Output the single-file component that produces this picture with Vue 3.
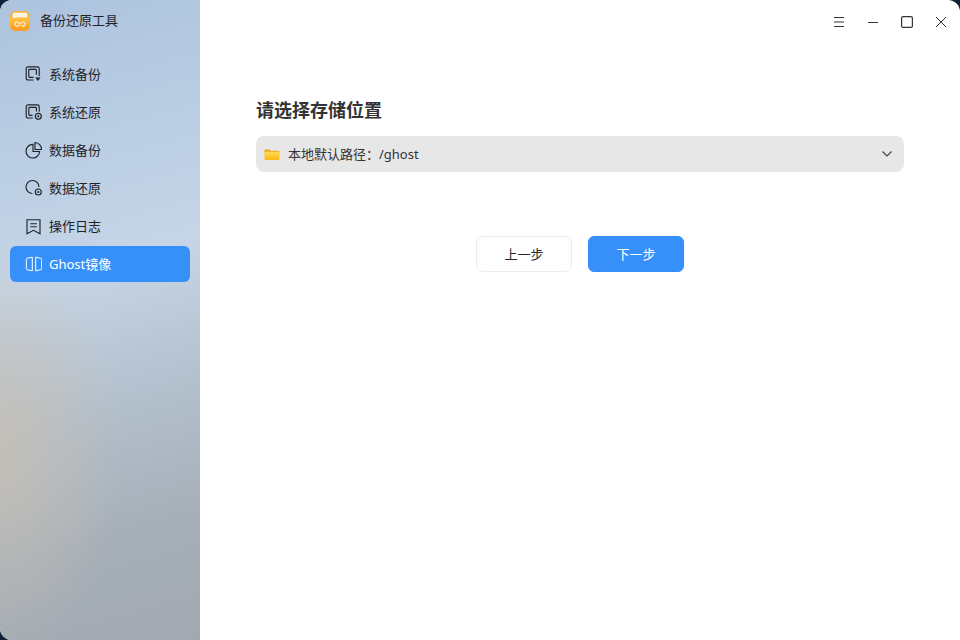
<template>
<div class="window">
  <aside class="sidebar">
    <div class="brand">
      <svg class="logo" width="20" height="20" viewBox="0 0 20 20">
        <defs>
          <linearGradient id="logoBody" x1="0" y1="0" x2="0" y2="1">
            <stop offset="0" stop-color="#ffc445" />
            <stop offset="1" stop-color="#f99a24" />
          </linearGradient>
        </defs>
        <rect x="0" y="0" width="20" height="20" rx="5.5" fill="#f9b23a" />
        <rect x="2.5" y="1.8" width="15" height="7" rx="1.5" fill="#fbf1e6" />
        <path d="M0 7.2c5 0 6.5-.4 8-.9h12V14.5a5.5 5.5 0 0 1-5.5 5.5h-9A5.5 5.5 0 0 1 0 14.5z" fill="url(#logoBody)" />
        <path d="M9.8 12.8c-.9-1.2-1.7-1.8-2.7-1.8a2.1 2.1 0 0 0 0 4.2c1.1 0 2-.9 2.9-2.1s1.8-2.1 2.9-2.1a2.1 2.1 0 0 1 0 4.2c-.7 0-1.3-.3-1.9-.8" fill="none" stroke="#fff1d2" stroke-width="1.1" />
      </svg>
      <span class="brand-name">备份还原工具</span>
    </div>
    <nav class="nav">
      <div v-for="item in navItems" :key="item.label" class="nav-item" :class="{ active: item.active }">
        <svg class="nav-icon" width="18" height="18" viewBox="0 0 18 18" fill="none" stroke="currentColor" stroke-width="1.15">
          <template v-if="item.icon === 'sysBackup'">
            <path d="M9.5 15H4a1.8 1.8 0 0 1-1.8-1.8V3.6A1.8 1.8 0 0 1 4 1.8h9.4a1.8 1.8 0 0 1 1.8 1.8v7.6" />
            <path d="M9.5 12.4H5.6a.8.8 0 0 1-.8-.8V5.2a.8.8 0 0 1 .8-.8h6a.8.8 0 0 1 .8.8v4.5" />
            <path d="M11.2 12.6h5.4l-2.7 3.3z" fill="currentColor" stroke="none" />
          </template>
          <template v-else-if="item.icon === 'sysRestore'">
            <path d="M8.8 15H4a1.8 1.8 0 0 1-1.8-1.8V3.6A1.8 1.8 0 0 1 4 1.8h9.4a1.8 1.8 0 0 1 1.8 1.8v5.2" />
            <path d="M8.6 12.4h-3a.8.8 0 0 1-.8-.8V5.2a.8.8 0 0 1 .8-.8h6a.8.8 0 0 1 .8.8v3.2" />
            <circle cx="14.3" cy="13.3" r="3" />
            <circle cx="14.3" cy="13.3" r="1.1" fill="currentColor" stroke="none" />
          </template>
          <template v-else-if="item.icon === 'dataBackup'">
            <path d="M9 3.4A6.8 6.8 0 1 0 15.6 10.5H9z" />
            <path d="M11 1.5v7h6.6A7 7 0 0 0 11 1.5z" />
          </template>
          <template v-else-if="item.icon === 'dataRestore'">
            <path d="M15 8A6.5 6.5 0 1 0 8.5 14.5" />
            <circle cx="14.3" cy="13" r="3" />
            <circle cx="14.3" cy="13" r="1.1" fill="currentColor" stroke="none" />
          </template>
          <template v-else-if="item.icon === 'log'">
            <path d="M3 2.7h13v14l-6.5-3.4L3 16.7z" />
            <path d="M6.2 6.7h6.6M6.2 9.7h6.6" />
          </template>
          <template v-else>
            <path d="M3.5 3.2L8.3 2.2v13.6l-4.8-1a1.2 1.2 0 0 1-1.2-1.2V4.4A1.2 1.2 0 0 1 3.5 3.2z" stroke-width="1" />
            <path d="M16.5 3.2l-4.8-1v13.6l4.8-1a1.2 1.2 0 0 0 1.2-1.2V4.4A1.2 1.2 0 0 0 16.5 3.2z" stroke-width="1" />
          </template>
        </svg>
        <span class="nav-label">{{ item.label }}</span>
      </div>
    </nav>
  </aside>

  <main class="main">
    <header class="titlebar">
      <svg width="12" height="12" viewBox="0 0 12 12" stroke="#333" stroke-width="1" fill="none">
        <path d="M1 1.5h10M1 6h10M1 10.5h10" />
      </svg>
      <svg width="12" height="12" viewBox="0 0 12 12" stroke="#333" stroke-width="1.2" fill="none">
        <path d="M1 6.5h10" />
      </svg>
      <svg width="12" height="12" viewBox="0 0 12 12" stroke="#333" stroke-width="1.2" fill="none">
        <rect x="0.6" y="0.6" width="10.8" height="10.8" rx="1.5" />
      </svg>
      <svg width="12" height="12" viewBox="0 0 12 12" stroke="#333" stroke-width="1" fill="none">
        <path d="M1 1l10 10M11 1L1 11" />
      </svg>
    </header>

    <section class="content">
      <h1 class="heading">请选择存储位置</h1>
      <div class="select">
        <svg class="folder" width="16" height="14" viewBox="0 0 16 14">
          <defs>
            <linearGradient id="folderBody" x1="0" y1="0" x2="0" y2="1">
              <stop offset="0" stop-color="#ffdc55" />
              <stop offset="1" stop-color="#fdb813" />
            </linearGradient>
          </defs>
          <path d="M0.5 3.5a1 1 0 0 1 1-1h4L7 3.7h7.5a1 1 0 0 1 1 1V6H.5z" fill="#efa81f" />
          <rect x="0.5" y="4.7" width="15" height="8.3" rx="1" fill="url(#folderBody)" />
        </svg>
        <span class="select-text">本地默认路径：/ghost</span>
        <svg class="chevron" width="12" height="8" viewBox="0 0 12 8" fill="none" stroke="#444" stroke-width="1.2">
          <path d="M1.5 1.5L6 6l4.5-4.5" />
        </svg>
      </div>
      <div class="actions">
        <button type="button" class="btn">上一步</button>
        <button type="button" class="btn primary">下一步</button>
      </div>
    </section>
  </main>
</div>
</template>

<script setup>
const navItems = [
  { label: '系统备份', icon: 'sysBackup' },
  { label: '系统还原', icon: 'sysRestore' },
  { label: '数据备份', icon: 'dataBackup' },
  { label: '数据还原', icon: 'dataRestore' },
  { label: '操作日志', icon: 'log' },
  { label: 'Ghost镜像', icon: 'ghost', active: true },
]
</script>

<style>
html, body {
  margin: 0;
  background: #0f2238;
  overflow: hidden;
}
</style>

<style scoped>
.window {
  width: 960px;
  height: 640px;
  display: flex;
  overflow: hidden;
  border-radius: 12px 12px 0 12px;
  background: #fff;
  font-family: "Noto Sans", "Noto Sans CJK SC", sans-serif;
  color: #262626;
}

.sidebar {
  width: 200px;
  flex-shrink: 0;
  display: flex;
  flex-direction: column;
  padding: 0 10px;
  box-sizing: border-box;
  background:
    radial-gradient(ellipse 120px 210px at 0 450px, rgba(200, 191, 178, 0.8), rgba(200, 191, 178, 0)),
    linear-gradient(165deg, #adc3de 0%, #b9cde3 22%, #c6d5e6 42%, #b3c0cd 62%, #a6afb8 82%, #a2a9b1 100%);
}

.brand {
  height: 40px;
  display: flex;
  align-items: center;
  gap: 10px;
  font-size: 13px;
  color: #1f2329;
}

.logo {
  margin-top: 1px;
}

.brand-name,
.nav-label,
.select-text {
  padding-bottom: 2px;
}

.nav {
  margin-top: 16px;
  display: flex;
  flex-direction: column;
  gap: 2px;
}

.nav-item {
  height: 36px;
  display: flex;
  align-items: center;
  gap: 7px;
  padding-left: 14px;
  border-radius: 6px;
  font-size: 13px;
  color: #1f2329;
}

.nav-item.active {
  background: #3790fa;
  color: #fff;
}

.nav-icon {
  flex-shrink: 0;
}

.main {
  flex: 1;
  display: flex;
  flex-direction: column;
  min-width: 0;
}

.titlebar {
  height: 44px;
  display: flex;
  justify-content: flex-end;
  align-items: center;
  gap: 22px;
  padding: 0 13px 0 0;
}

.content {
  padding: 54px 56px 0;
}

.heading {
  margin: 0;
  font-size: 18px;
  line-height: 24px;
  font-weight: 600;
  color: #333;
}

.select {
  margin-top: 14px;
  height: 36px;
  display: flex;
  align-items: center;
  padding: 0 11px 0 8px;
  border-radius: 8px;
  background: #e7e7e7;
  font-size: 13px;
  color: #333;
}

.select-text {
  margin-left: 8px;
  flex: 1;
}

.actions {
  margin-top: 64px;
  display: flex;
  justify-content: center;
  gap: 16px;
}

.btn {
  width: 96px;
  height: 36px;
  padding: 0 0 2px;
  border: 1px solid #ececec;
  border-radius: 7px;
  background: #fff;
  color: #262626;
  font-family: inherit;
  font-size: 13px;
}

.btn.primary {
  border-radius: 6px;
  background: #3790fa;
  border-color: #3790fa;
  color: #fff;
}
</style>
